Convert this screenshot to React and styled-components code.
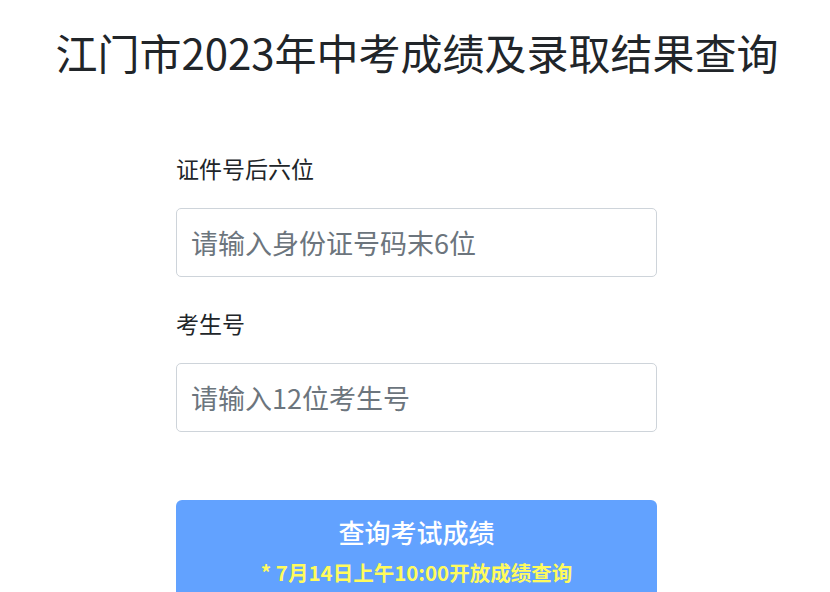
import React from "react";
import styled, { createGlobalStyle } from "styled-components";

const Global = createGlobalStyle`
  html, body { margin: 0; padding: 0; background: #fff; }
  body { font-family: "Noto Sans CJK SC", "Noto Sans", sans-serif; color: #212529; }
  * { box-sizing: border-box; }
`;

const Page = styled.div`
  width: 830px;
  padding-top: 27px;
`;

const Title = styled.h1`
  margin: 0;
  text-align: center;
  font-size: 42px;
  font-weight: 400;
  line-height: 1.2;
  padding-left: 4px;
  color: #212529;
`;

const Form = styled.form`
  width: 481px;
  margin: 75px 0 0 176px;
  display: flex;
  flex-direction: column;
`;

const Field = styled.div`
  display: flex;
  flex-direction: column;
  gap: 23px;
  margin-bottom: ${(p) => p.$mb || 0}px;
`;

const Label = styled.label`
  font-size: 23px;
  line-height: 33px;
  color: #212529;
`;

const Input = styled.input`
  width: 100%;
  height: 69px;
  border: 1px solid #ced4da;
  border-radius: 5px;
  padding: 0 14px;
  font-family: inherit;
  font-size: 27px;
  color: #495057;
  outline: none;
  &::placeholder { color: #6c757d; }
`;

const Button = styled.button`
  width: 100%;
  border: none;
  border-radius: 6px;
  background: #62a2ff;
  color: #fff;
  padding: 12px 0 14px;
  font-family: inherit;
  display: flex;
  flex-direction: column;
  align-items: center;
  gap: 6px;
  cursor: pointer;
`;

const ButtonMain = styled.span`
  font-size: 26px;
  line-height: 39px;
  font-weight: 500;
`;

const ButtonNote = styled.span`
  font-size: 20.5px;
  line-height: 30px;
  font-weight: 600;
  color: #fffb5c;
`;

export default function App() {
  return (
    <>
      <Global />
      <Page>
        <Title>江门市2023年中考成绩及录取结果查询</Title>
        <Form onSubmit={(e) => e.preventDefault()}>
          <Field $mb={30}>
            <Label>证件号后六位</Label>
            <Input placeholder="请输入身份证号码末6位" />
          </Field>
          <Field $mb={68}>
            <Label>考生号</Label>
            <Input placeholder="请输入12位考生号" />
          </Field>
          <Button type="submit">
            <ButtonMain>查询考试成绩</ButtonMain>
            <ButtonNote>* 7月14日上午10:00开放成绩查询</ButtonNote>
          </Button>
        </Form>
      </Page>
    </>
  );
}
